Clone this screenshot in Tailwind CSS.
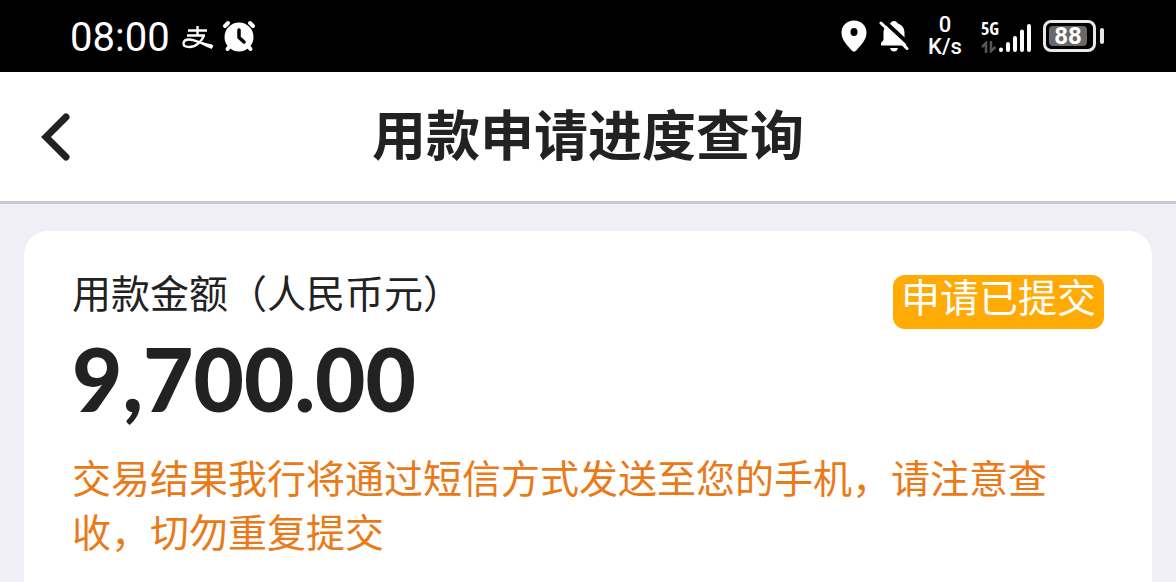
<!DOCTYPE html>
<html lang="zh-CN">
<head>
    <meta charset="UTF-8">
    <meta name="viewport" content="width=device-width, initial-scale=1.0">
    <title>用款申请进度查询</title>
    <script src="https://cdn.jsdelivr.net/npm/@tailwindcss/browser@4"></script>
</head>
<body class="bg-[#efeff5] text-[#222222] min-h-screen flex flex-col font-['Noto_Sans_CJK_SC',sans-serif]">

    <!-- Status Bar -->
    <div class="h-[72px] shrink-0 bg-black text-white pl-[70px] pr-[72px] flex items-center justify-between font-['Roboto',sans-serif]">
        <div class="flex items-center">
            <span class="pt-1 text-[40px] leading-[44px]">08:00</span>
            <svg class="w-8 h-6 ml-3 mt-1" viewBox="0 0 32 24" fill="none" stroke="currentColor" aria-hidden="true">
                <path d="M6 4.500H25M15.500 0V9M5 9.500H23" stroke-width="2.300"/>
                <path d="M22 9.500C20 15 14 21 7.500 21C3.500 21 1.500 19.500 1.500 17.500C1.500 15 4 13.500 7.500 13.500C13 13.500 19 18 31 20.500" stroke-width="2.300"/>
                <path d="M19 16L30 18.500V23Q25 21.500 18 17.500Z" fill="currentColor" stroke="none"/>
            </svg>
            <svg class="w-[34px] h-8 ml-2" viewBox="0 0 34 32" aria-hidden="true">
                <g fill="none" stroke="#fff" stroke-linecap="round" stroke-width="4">
                    <path d="M3 6L6 3M31 6L28 3"/>
                    <path d="M8 26L5.500 29M26 26L28.500 29"/>
                </g>
                <circle cx="17" cy="17" r="14.500" fill="#fff"/>
                <path d="M17 10V17.500L22 22" fill="none" stroke="#000" stroke-linecap="round" stroke-linejoin="round" stroke-width="3.500"/>
            </svg>
        </div>
        <div class="flex items-center">
            <svg class="w-[26px] h-8" viewBox="0 0 26 32" aria-hidden="true">
                <path fill="#fff" fill-rule="evenodd" d="M13 0.500C5.800 0.500 0.500 5.700 0.500 12.500C0.500 20 6 25 10.500 30.300Q13 33 15.500 30.300C20 25 25.500 20 25.500 12.500C25.500 5.700 20.200 0.500 13 0.500ZM13 8A3.500 4 0 1 1 13 16A3.500 4 0 1 1 13 8Z"/>
            </svg>
            <svg class="w-[30px] h-8 ml-3" viewBox="0 0 30 32" aria-hidden="true">
                <path fill="#fff" d="M15 1C17 1 18 2 18.500 3.300C23 4.800 25.500 8 25.500 13V20L27.500 25.500H2V23L4.500 20V13C4.500 8 7 4.800 11.500 3.300C12 2 13 1 15 1Z"/>
                <path fill="#fff" d="M11 28H19Q18 31.500 15 31.500Q12 31.500 11 28Z"/>
                <path stroke="#000" stroke-width="4" d="M4 0L32 26"/>
                <path stroke="#fff" stroke-width="3" stroke-linecap="round" d="M2 3L28 28.500"/>
            </svg>
            <div class="w-10 ml-4 flex flex-col items-center text-[22px] leading-[22px] font-medium">
                <span>0</span>
                <span>K/s</span>
            </div>
            <div class="flex items-end ml-4">
                <div class="flex flex-col items-start">
                    <span class="text-[18px] leading-[18px] font-bold font-['Open_Sans_Condensed','Roboto_Condensed','Roboto',sans-serif]">5G</span>
                    <svg class="w-4 h-3 mt-1" viewBox="0 0 16 12" fill="none" stroke="#555" stroke-width="2.500" aria-hidden="true">
                        <path d="M5 12V2L1 6M10 0V10L14.500 6"/>
                    </svg>
                </div>
                <svg class="w-8 h-8" viewBox="0 0 32 32" fill="none" stroke="#fff" stroke-width="4" stroke-linecap="round" aria-hidden="true">
                    <path d="M2 28.500V29M9 23V29M16 17V29M23 10.500V29M30 5V29"/>
                </svg>
            </div>
            <div class="flex items-center ml-3">
                <div class="w-[53px] h-8 border-[3px] border-[#e8e8e8] rounded-lg p-[3px]">
                    <div class="w-[38px] h-full rounded-sm bg-[#686868] flex items-center justify-center text-[24px] leading-[24px] font-bold">88</div>
                </div>
                <span class="w-1 h-4 ml-1 bg-[#e8e8e8] rounded-full"></span>
            </div>
        </div>
    </div>

    <!-- Page Header -->
    <header class="h-[132px] shrink-0 bg-white border-b-[3px] border-[#c8c8ce] px-10 grid grid-cols-[48px_1fr_48px] items-center">
        <button type="button" aria-label="返回" class="h-16">
            <svg class="w-8 h-12" viewBox="0 0 32 48" fill="none" stroke="currentColor" stroke-width="7" stroke-linecap="round" aria-hidden="true">
                <path d="M26 4L6 24L26 44"/>
            </svg>
        </button>
        <h1 class="pb-2 text-center text-[54px] leading-[64px] font-bold">用款申请进度查询</h1>
    </header>

    <!-- Application Card -->
    <main class="flex-1 flex flex-col px-6 pt-[27px]">
        <section class="flex-1 bg-white rounded-t-3xl px-12 pt-8">
            <div class="flex items-start justify-between">
                <h2 class="text-[39px] leading-[56px]">用款金额（人民币元）</h2>
                <span class="mt-3 h-[54px] px-2 rounded-xl bg-[#ffaa05] text-white text-[39px] leading-[40px]">申请已提交</span>
            </div>
            <p class="text-[87px] leading-[100px] font-black font-['Lato',sans-serif]">9,700.00</p>
            <p class="mt-5 text-[39px] leading-[54px] text-[#ea7a18]">交易结果我行将通过短信方式发送至您的手机，请注意查收，切勿重复提交</p>
        </section>
    </main>

</body>
</html>
